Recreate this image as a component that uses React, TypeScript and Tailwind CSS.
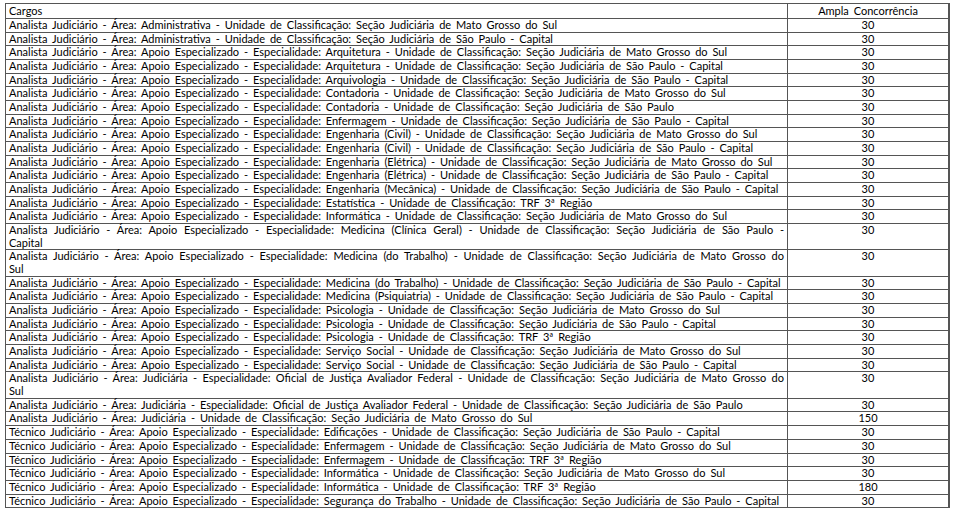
const rows: { cargo: string; vagas: string; wrap?: [string, string] }[] = [
  { cargo: "Analista Judiciário - Área: Administrativa - Unidade de Classificação: Seção Judiciária de Mato Grosso do Sul", vagas: "30" },
  { cargo: "Analista Judiciário - Área: Administrativa - Unidade de Classificação: Seção Judiciária de São Paulo - Capital", vagas: "30" },
  { cargo: "Analista Judiciário - Área: Apoio Especializado - Especialidade: Arquitetura - Unidade de Classificação: Seção Judiciária de Mato Grosso do Sul", vagas: "30" },
  { cargo: "Analista Judiciário - Área: Apoio Especializado - Especialidade: Arquitetura - Unidade de Classificação: Seção Judiciária de São Paulo - Capital", vagas: "30" },
  { cargo: "Analista Judiciário - Área: Apoio Especializado - Especialidade: Arquivologia - Unidade de Classificação: Seção Judiciária de São Paulo - Capital", vagas: "30" },
  { cargo: "Analista Judiciário - Área: Apoio Especializado - Especialidade: Contadoria - Unidade de Classificação: Seção Judiciária de Mato Grosso do Sul", vagas: "30" },
  { cargo: "Analista Judiciário - Área: Apoio Especializado - Especialidade: Contadoria - Unidade de Classificação: Seção Judiciária de São Paulo", vagas: "30" },
  { cargo: "Analista Judiciário - Área: Apoio Especializado - Especialidade: Enfermagem - Unidade de Classificação: Seção Judiciária de São Paulo - Capital", vagas: "30" },
  { cargo: "Analista Judiciário - Área: Apoio Especializado - Especialidade: Engenharia (Civil) - Unidade de Classificação: Seção Judiciária de Mato Grosso do Sul", vagas: "30" },
  { cargo: "Analista Judiciário - Área: Apoio Especializado - Especialidade: Engenharia (Civil) - Unidade de Classificação: Seção Judiciária de São Paulo - Capital", vagas: "30" },
  { cargo: "Analista Judiciário - Área: Apoio Especializado - Especialidade: Engenharia (Elétrica) - Unidade de Classificação: Seção Judiciária de Mato Grosso do Sul", vagas: "30" },
  { cargo: "Analista Judiciário - Área: Apoio Especializado - Especialidade: Engenharia (Elétrica) - Unidade de Classificação: Seção Judiciária de São Paulo - Capital", vagas: "30" },
  { cargo: "Analista Judiciário - Área: Apoio Especializado - Especialidade: Engenharia (Mecânica) - Unidade de Classificação: Seção Judiciária de São Paulo - Capital", vagas: "30" },
  { cargo: "Analista Judiciário - Área: Apoio Especializado - Especialidade: Estatística - Unidade de Classificação: TRF 3ª Região", vagas: "30" },
  { cargo: "Analista Judiciário - Área: Apoio Especializado - Especialidade: Informática - Unidade de Classificação: Seção Judiciária de Mato Grosso do Sul", vagas: "30" },
  {
    cargo: "",
    vagas: "30",
    wrap: [
      "Analista Judiciário - Área: Apoio Especializado - Especialidade: Medicina (Clínica Geral) - Unidade de Classificação: Seção Judiciária de São Paulo -",
      "Capital",
    ],
  },
  {
    cargo: "",
    vagas: "30",
    wrap: [
      "Analista Judiciário - Área: Apoio Especializado - Especialidade: Medicina (do Trabalho) - Unidade de Classificação: Seção Judiciária de Mato Grosso do",
      "Sul",
    ],
  },
  { cargo: "Analista Judiciário - Área: Apoio Especializado - Especialidade: Medicina (do Trabalho) - Unidade de Classificação: Seção Judiciária de São Paulo - Capital", vagas: "30" },
  { cargo: "Analista Judiciário - Área: Apoio Especializado - Especialidade: Medicina (Psiquiatria) - Unidade de Classificação: Seção Judiciária de São Paulo - Capital", vagas: "30" },
  { cargo: "Analista Judiciário - Área: Apoio Especializado - Especialidade: Psicologia - Unidade de Classificação: Seção Judiciária de Mato Grosso do Sul", vagas: "30" },
  { cargo: "Analista Judiciário - Área: Apoio Especializado - Especialidade: Psicologia - Unidade de Classificação: Seção Judiciária de São Paulo - Capital", vagas: "30" },
  { cargo: "Analista Judiciário - Área: Apoio Especializado - Especialidade: Psicologia - Unidade de Classificação: TRF 3ª Região", vagas: "30" },
  { cargo: "Analista Judiciário - Área: Apoio Especializado - Especialidade: Serviço Social - Unidade de Classificação: Seção Judiciária de Mato Grosso do Sul", vagas: "30" },
  { cargo: "Analista Judiciário - Área: Apoio Especializado - Especialidade: Serviço Social - Unidade de Classificação: Seção Judiciária de São Paulo - Capital", vagas: "30" },
  {
    cargo: "",
    vagas: "30",
    wrap: [
      "Analista Judiciário - Área: Judiciária - Especialidade: Oficial de Justiça Avaliador Federal - Unidade de Classificação: Seção Judiciária de Mato Grosso do",
      "Sul",
    ],
  },
  { cargo: "Analista Judiciário - Área: Judiciária - Especialidade: Oficial de Justiça Avaliador Federal - Unidade de Classificação: Seção Judiciária de São Paulo", vagas: "30" },
  { cargo: "Analista Judiciário - Área: Judiciária - Unidade de Classificação: Seção Judiciária de Mato Grosso do Sul", vagas: "150" },
  { cargo: "Técnico Judiciário - Área: Apoio Especializado - Especialidade: Edificações - Unidade de Classificação: Seção Judiciária de São Paulo - Capital", vagas: "30" },
  { cargo: "Técnico Judiciário - Área: Apoio Especializado - Especialidade: Enfermagem - Unidade de Classificação: Seção Judiciária de Mato Grosso do Sul", vagas: "30" },
  { cargo: "Técnico Judiciário - Área: Apoio Especializado - Especialidade: Enfermagem - Unidade de Classificação: TRF 3ª Região", vagas: "30" },
  { cargo: "Técnico Judiciário - Área: Apoio Especializado - Especialidade: Informática - Unidade de Classificação: Seção Judiciária de Mato Grosso do Sul", vagas: "30" },
  { cargo: "Técnico Judiciário - Área: Apoio Especializado - Especialidade: Informática - Unidade de Classificação: TRF 3ª Região", vagas: "180" },
  { cargo: "Técnico Judiciário - Área: Apoio Especializado - Especialidade: Segurança do Trabalho - Unidade de Classificação: Seção Judiciária de São Paulo - Capital", vagas: "30" },
];

export default function App() {
  return (
    <div className="h-[510px] w-[956px] bg-white pl-[5px] pt-[3px] font-['Lato','Liberation_Sans',sans-serif] text-[11px] leading-[12.67px] text-black [word-spacing:2.1px]">
      <div className="w-[945px] border-t border-l border-r-2 border-[#555]">
        <div className="grid h-[15px] grid-cols-[782px_1fr] border-b border-[#555]">
          <div className="flex items-end border-r border-[#555] px-[3px]">Cargos</div>
          <div className="flex items-end justify-center">Ampla Concorrência</div>
        </div>
        {rows.map((r, i) => (
          <div key={i} className="grid grid-cols-[782px_1fr] border-b border-[#555]">
            <div className="min-w-0 border-r border-[#555] px-[3px]">
              {r.wrap ? (
                <>
                  <div className="text-justify [text-align-last:justify]">{r.wrap[0]}</div>
                  <div>{r.wrap[1]}</div>
                </>
              ) : (
                <div className="whitespace-nowrap">{r.cargo}</div>
              )}
            </div>
            <div className="text-center">{r.vagas}</div>
          </div>
        ))}
      </div>
    </div>
  );
}
